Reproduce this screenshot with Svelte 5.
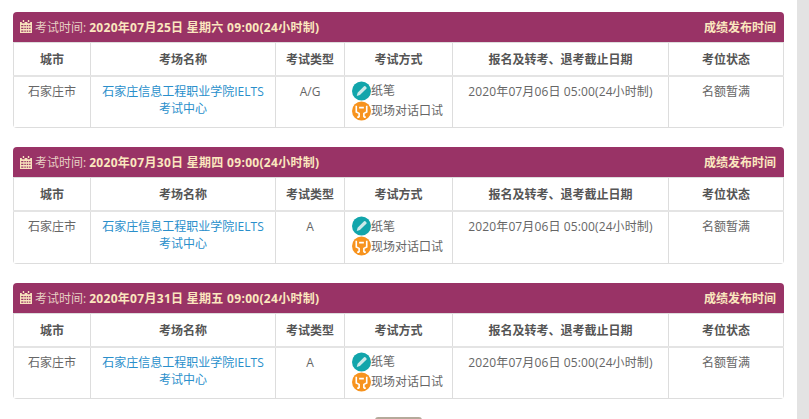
<script>
  const sessions = [
    { date: '2020年07月25日 星期六 09:00(24小时制)', type: 'A/G' },
    { date: '2020年07月30日 星期四 09:00(24小时制)', type: 'A' },
    { date: '2020年07月31日 星期五 09:00(24小时制)', type: 'A' }
  ];
</script>

<div class="page">
  <div class="main">
    {#each sessions as s}
      <section class="card">
        <header class="head">
          <span class="when">
            <svg class="cal" viewBox="0 0 13 14" width="12" height="13">
              <path fill="#f8e2bd" d="M3 0h1.500v2H3zM8.500 0H10v2H8.500zM0 2h2v1.500h3V2h3v1.500h3V2h2v12H0zM1.300 5.300v1.400h2.400V5.300zm3.400 0v1.400h1.600V5.300zm2.600 0v1.400h1.600V5.300zm2.600 0v1.400h1.500V5.300zM1.300 8.300v1.400h2.400V8.300zm3.400 0v1.400h1.600V8.300zm2.600 0v1.400h1.600V8.300zm2.600 0v1.400h1.500V8.300zM1.300 11.300v1.400h2.400v-1.400zm3.400 0v1.400h1.600v-1.400zm2.600 0v1.400h1.600v-1.400zm2.600 0v1.400h1.500v-1.400z"/>
            </svg>
            <span class="lab">考试时间:</span>
            <b class="date">{s.date}</b>
          </span>
          <b>成绩发布时间</b>
        </header>
        <table>
          <colgroup>
            <col style="width:77px" />
            <col style="width:185px" />
            <col style="width:69px" />
            <col style="width:108px" />
            <col style="width:216px" />
            <col />
          </colgroup>
          <thead>
            <tr>
              <th>城市</th>
              <th>考场名称</th>
              <th>考试类型</th>
              <th>考试方式</th>
              <th>报名及转考、退考截止日期</th>
              <th>考位状态</th>
            </tr>
          </thead>
          <tbody>
            <tr>
              <td>石家庄市</td>
              <td><span class="link">石家庄信息工程职业学院IELTS考试中心</span></td>
              <td>{s.type}</td>
              <td class="modes">
                <div class="mode">
                  <svg viewBox="0 0 20 20" width="19" height="20">
                    <circle cx="10" cy="10" r="10" fill="#12a5ab" />
                    <path fill="#cdeaea" d="M5 15.200l.9-3.300 6.800-6.800a1 1 0 0 1 1.400 0l1 1a1 1 0 0 1 0 1.400l-6.800 6.800z" />
                  </svg>
                  <span>纸笔</span>
                </div>
                <div class="mode">
                  <svg viewBox="0 0 20 20" width="19" height="20">
                    <circle cx="10" cy="10" r="10" fill="#f7931e" />
                    <path fill="none" stroke="#fff" stroke-width="1.700" d="M4.500 4.500v6.500l3 1.500v4M15.500 4.500v6.500l-3 1.500v4M7.500 6.500h5M5.500 16.500h2M12.500 16.500h2" />
                  </svg>
                  <span>现场对话口试</span>
                </div>
              </td>
              <td><span class="deadline">2020年07月06日 05:00(24小时制)</span></td>
              <td>名额暂满</td>
            </tr>
          </tbody>
        </table>
      </section>
    {/each}
    <div class="more"></div>
  </div>
  <div class="scrollbar"></div>
</div>

<style>
  :global(body) {
    margin: 0;
    background: #fff;
  }
  .page {
    display: flex;
    height: 419px;
    overflow: hidden;
    font-family: "Open Sans", "Noto Sans CJK SC", sans-serif;
    font-size: 12px;
    color: #666;
  }
  .main {
    flex: 1;
    padding: 11.500px 13px 0 13px;
  }
  .scrollbar {
    width: 12px;
    background: #e3e3e3;
  }
  .card {
    border-radius: 4px;
    margin-bottom: 19px;
    background: #fff;
    overflow: hidden;
  }
  .head {
    display: flex;
    justify-content: space-between;
    align-items: center;
    height: 31px;
    box-sizing: border-box;
    padding: 0 8px 0 7px;
    background: #993366;
    color: #fbe7bf;
    border-bottom: 1px solid #ddd;
  }
  .when {
    display: flex;
    align-items: center;
  }
  .cal {
    margin-right: 3px;
  }
  .lab {
    color: #e8d0c4;
    margin-right: 3px;
  }
  .date {
    letter-spacing: 0.3px;
  }
  .deadline {
    letter-spacing: 0.12px;
  }
  table {
    width: 100%;
    border-collapse: collapse;
    table-layout: fixed;
    border: 1px solid #ddd;
    border-top: none;
  }
  th, td {
    border-left: 1px solid #ddd;
    text-align: center;
    padding: 0 8px;
  }
  th:first-child, td:first-child {
    border-left: none;
  }
  th {
    height: 32px;
    font-weight: 700;
    color: #555;
    border-bottom: 2px solid #e4e4e4;
  }
  td {
    height: 52px;
    vertical-align: top;
    padding-top: 6px;
    line-height: 17px;
    box-sizing: border-box;
  }
  .link {
    color: #2a8fcb;
  }
  .modes {
    text-align: left;
    padding: 4px 0 0 7px;
  }
  .mode {
    display: flex;
    align-items: center;
    height: 20px;
    white-space: nowrap;
  }
  .mode svg {
    flex: none;
  }
  .more {
    width: 47px;
    height: 30px;
    margin: -1px auto 0;
    background: #b5aa9b;
    border-radius: 3px;
  }
</style>
